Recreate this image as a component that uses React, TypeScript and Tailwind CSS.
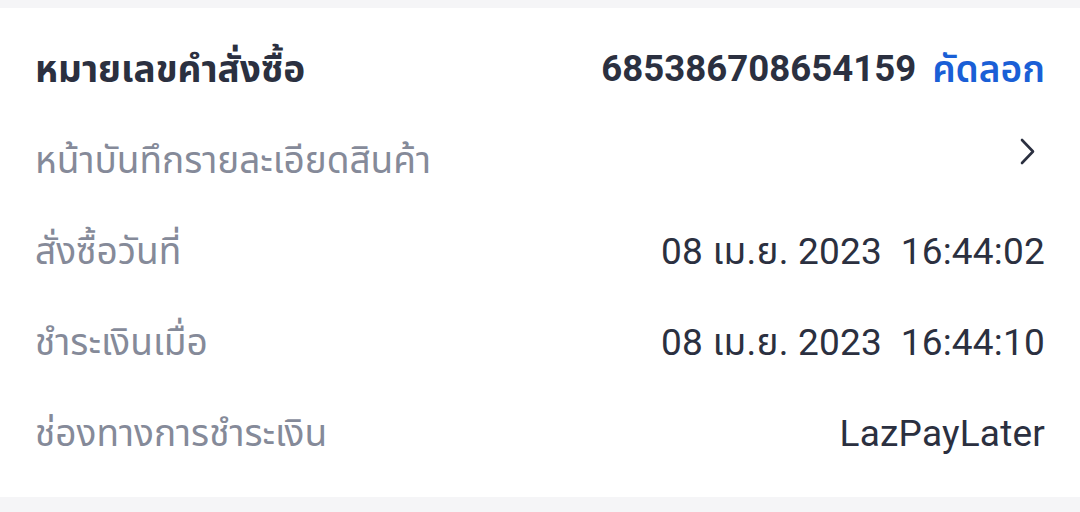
const rows = [
    { label: 'สั่งซื้อวันที่', value: '08 เม.ย. 2023\u00a0\u00a016:44:02' },
    { label: 'ชำระเงินเมื่อ', value: '08 เม.ย. 2023\u00a0\u00a016:44:10' },
    { label: 'ช่องทางการชำระเงิน', value: 'LazPayLater' },
]

export default function App() {
    return (
        <div className="w-[1080px] h-[512px] bg-[#f5f5f7] pt-2 font-['Roboto','Noto_Sans_Thai',sans-serif]">
            <div className="bg-white px-[35px] pt-[16px] pb-[18px]">
                <div className="flex items-center justify-between h-[91px]">
                    <span className="text-[37px] font-bold text-[#2b3040]">หมายเลขคำสั่งซื้อ</span>
                    <div className="flex items-center gap-[16px]">
                        <span className="text-[36.6px] font-bold text-[#2b3040]">685386708654159</span>
                        <span className="text-[37px] font-semibold text-[#1a5fd6]">คัดลอก</span>
                    </div>
                </div>
                <div className="flex items-center justify-between h-[91px]">
                    <span className="text-[37px] text-[#858a99]">หน้าบันทึกรายละเอียดสินค้า</span>
                    <svg width="15" height="27" viewBox="0 0 15 27" fill="none" className="mb-[18px] mr-[10px]">
                        <path d="M2 2 L13 13.5 L2 25" stroke="#2b3040" strokeWidth="2.6" strokeLinecap="round" strokeLinejoin="round" />
                    </svg>
                </div>
                {rows.map(row => (
                    <div key={row.label} className="flex items-center justify-between h-[91px]">
                        <span className="text-[37px] text-[#858a99]">{row.label}</span>
                        <span className="text-[37px] tracking-[0.2px] text-[#2b3040]">{row.value}</span>
                    </div>
                ))}
            </div>
        </div>
    )
}
